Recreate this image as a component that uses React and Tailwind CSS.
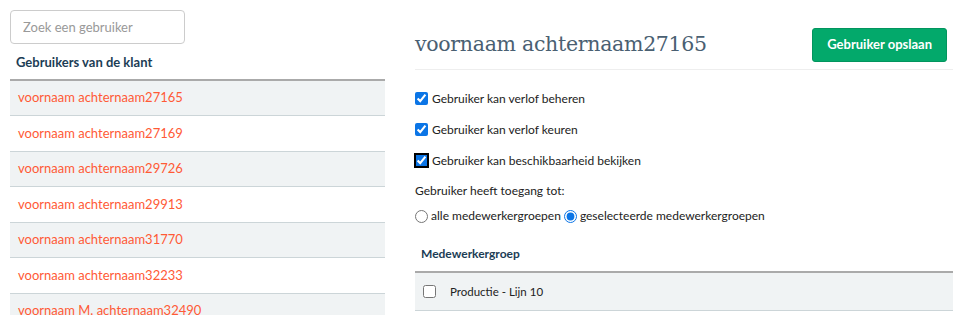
import { useState } from 'react';

const users = [
  'voornaam achternaam27165',
  'voornaam achternaam27169',
  'voornaam achternaam29726',
  'voornaam achternaam29913',
  'voornaam achternaam31770',
  'voornaam achternaam32233',
  'voornaam M. achternaam32490',
];

const App = () => {
  const [access, setAccess] = useState('selected');

  return (
    <div className="flex h-[315px] overflow-hidden bg-white font-['Lato','Liberation_Sans',sans-serif] text-[13px] text-[#222]">
      <div className="w-[375px] ml-[10px] shrink-0 pt-[10px]">
        <input
          type="text"
          placeholder="Zoek een gebruiker"
          className="w-[175px] h-[34px] px-3 border border-[#ccc] rounded-[4px] text-[13px] placeholder-[#999] focus:outline-none"
        />
        <div className="px-[6px] pt-[9px] pb-[6px] font-bold text-[#1c3d55]">Gebruikers van de klant</div>
        <div className="border-t-2 border-[#aaa]">
          {users.map((u, i) => (
            <div
              key={u}
              className={`h-[35.5px] flex items-center px-2 border-b border-[#ccd5d8] text-[#ff5a36] ${
                i % 2 === 0 ? 'bg-[#f0f3f4]' : 'bg-white'
              }`}
            >
              {u}
            </div>
          ))}
        </div>
      </div>

      <div className="w-[538px] ml-[30px] shrink-0 text-[12px]">
        <div className="flex items-center justify-between h-[70px] pt-[22px] pb-[2px] border-b border-[#eee]">
          <h1 className="font-['DejaVu_Serif',serif] font-light text-[20.5px] text-[#4a6072] tracking-[-0.3px]">
            voornaam achternaam27165
          </h1>
          <button className="mr-[6px] h-[34px] px-[14px] rounded-[3px] bg-[#03a96b] border border-[#02955e] text-white font-bold text-[13px]">
            Gebruiker opslaan
          </button>
        </div>

        <div className="pt-[13px] flex flex-col">
          {['Gebruiker kan verlof beheren', 'Gebruiker kan verlof keuren', 'Gebruiker kan beschikbaarheid bekijken'].map((l, i) => (
            <label key={l} className="flex items-center gap-[4px] h-[31px]">
              <input
                type="checkbox"
                defaultChecked
                className={`w-[13px] h-[13px] m-0 accent-[#0b75e6] ${i === 2 ? 'outline-2 outline-black -outline-offset-1 rounded-[3px]' : ''}`}
              />
              <span>{l}</span>
            </label>
          ))}
          <div className="h-[30px] flex items-center">Gebruiker heeft toegang tot:</div>
          <div className="flex items-center h-[20px]">
            <input
              type="radio"
              name="access"
              checked={access === 'all'}
              onChange={() => setAccess('all')}
              className="w-[13px] h-[13px] m-0 mr-[3px] accent-[#0b75e6]"
            />
            <span className="mr-[3px]">alle medewerkergroepen</span>
            <input
              type="radio"
              name="access"
              checked={access === 'selected'}
              onChange={() => setAccess('selected')}
              className="w-[13px] h-[13px] m-0 mr-[3px] accent-[#0b75e6]"
            />
            <span>geselecteerde medewerkergroepen</span>
          </div>
        </div>

        <div className="mt-[10px] px-[6px] h-[35px] flex items-center font-bold text-[#1c3d55]">Medewerkergroep</div>
        <div className="border-t-2 border-[#aaa]">
          <div className="h-[38px] flex items-center bg-[#f0f3f4] border-b border-[#ccd5d8] px-[8px]">
            <input type="checkbox" className="w-[13px] h-[13px] m-0" />
            <span className="ml-[14px] text-[11.5px]">Productie - Lijn 10</span>
          </div>
        </div>
      </div>
    </div>
  );
};

export default App;
